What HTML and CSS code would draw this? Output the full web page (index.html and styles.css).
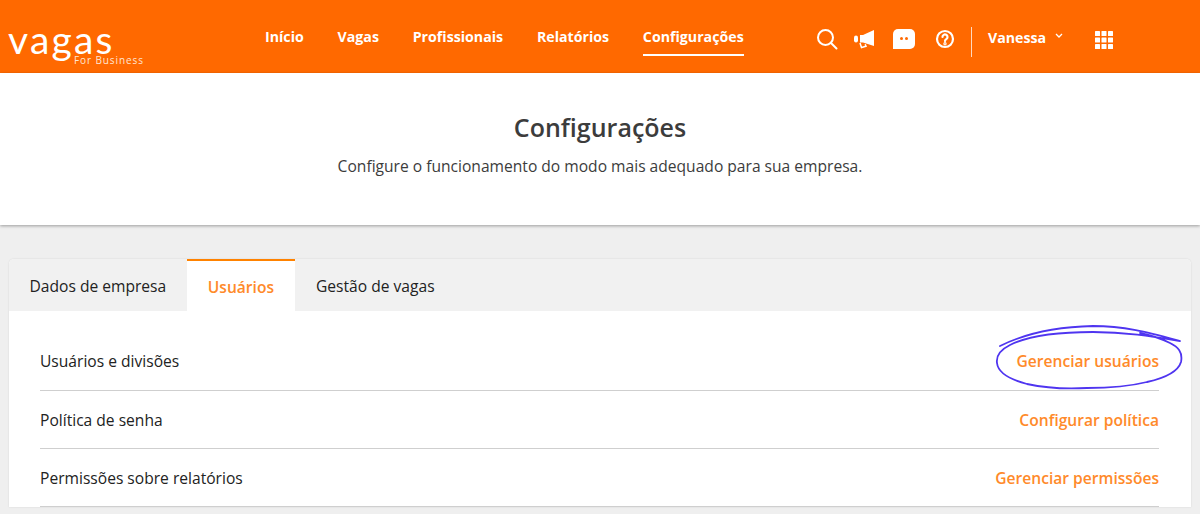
FILE: index.html
```html
<!DOCTYPE html>
<html lang="pt-BR">
<head>
<meta charset="utf-8">
<title>Configurações</title>
<link rel="stylesheet" href="styles.css">
</head>
<body>
<header class="topbar">
  <div class="logo">
    <span class="logo-word">vagas</span>
    <span class="logo-sub">For Business</span>
  </div>
  <nav class="nav">
    <a class="nav-item">Início</a>
    <a class="nav-item">Vagas</a>
    <a class="nav-item">Profissionais</a>
    <a class="nav-item">Relatórios</a>
    <a class="nav-item nav-active">Configurações</a>
  </nav>
  <div class="tools">
    <svg class="icon" width="22" height="22" viewBox="0 0 22 22" fill="none" stroke="#fff" stroke-width="2"><circle cx="9.5" cy="9.5" r="7.5"/><path d="M15 15l5.5 5.5" stroke-linecap="round"/></svg>
    <svg class="icon" width="22" height="20" viewBox="0 0 22 20" fill="#fff"><path d="M21 1v16l-11-3.5H7V6h3z"/><rect x="1" y="6.5" width="4" height="7" rx="2"/><path d="M7 14l1.500 4.500 4.500-1.300-.8-2" fill="none" stroke="#fff" stroke-width="1.500"/></svg>
    <svg class="icon" width="22" height="20" viewBox="0 0 22 20"><path d="M5 0h12a5 5 0 0 1 5 5v10a5 5 0 0 1-5 5H0V5a5 5 0 0 1 5-5z" fill="#fff"/><circle cx="8.500" cy="9.500" r="1.500" fill="#ff6900"/><circle cx="13.500" cy="9.500" r="1.500" fill="#ff6900"/></svg>
    <svg class="icon" width="20" height="20" viewBox="0 0 20 20" fill="none" stroke="#fff" stroke-width="2.200"><circle cx="10" cy="10" r="8"/><path d="M7.500 8a2.500 2.500 0 1 1 3.800 2.100c-.9.600-1.300 1-1.300 2" stroke-linecap="round"/><circle cx="10" cy="14.800" r=".6"/></svg>
    <span class="divider"></span>
    <span class="user">Vanessa</span>
    <svg class="chevron" width="8" height="6" viewBox="0 0 8 6" fill="none" stroke="#fff" stroke-width="1.300"><path d="M1 1l3 3 3-3"/></svg>
    <svg class="grid-icon" width="18" height="18" viewBox="0 0 18 18" fill="#fff"><rect width="5" height="5" rx=".5"/><rect x="6.500" width="5" height="5" rx=".5"/><rect x="13" width="5" height="5" rx=".5"/><rect y="6.500" width="5" height="5" rx=".5"/><rect x="6.500" y="6.500" width="5" height="5" rx=".5"/><rect x="13" y="6.500" width="5" height="5" rx=".5"/><rect y="13" width="5" height="5" rx=".5"/><rect x="6.500" y="13" width="5" height="5" rx=".5"/><rect x="13" y="13" width="5" height="5" rx=".5"/></svg>
  </div>
</header>

<section class="hero">
  <h1 class="hero-title">Configurações</h1>
  <p class="hero-text">Configure o funcionamento do modo mais adequado para sua empresa.</p>
</section>

<main class="content">
  <div class="card">
    <div class="tabs">
      <a class="tab">Dados de empresa</a>
      <a class="tab tab-active">Usuários</a>
      <a class="tab">Gestão de vagas</a>
    </div>
    <ul class="rows">
      <li class="row"><span>Usuários e divisões</span><a class="row-link">Gerenciar usuários</a></li>
      <li class="row"><span>Política de senha</span><a class="row-link">Configurar política</a></li>
      <li class="row"><span>Permissões sobre relatórios</span><a class="row-link">Gerenciar permissões</a></li>
    </ul>
  </div>
</main>

<svg class="scribble" width="1200" height="514" viewBox="0 0 1200 514" fill="none" stroke="#4f35f0" stroke-width="1.800" stroke-linecap="round" stroke-linejoin="round">
  <path d="M1000 346C1020 336 1050 327 1093 326C1125 326 1150 333 1180 341C1150 336 1125 332 1093 332C1060 332 1030 335 1010 345C1000 350 996 356 997 363C998 372 1008 379 1027 384C1050 389 1070 389 1087 388C1115 388 1135 385 1147 382C1165 378 1178 372 1181 362C1183 352 1178 347 1170 343C1160 338 1150 335 1140 333"/>
</svg>
</body>
</html>
```

FILE: styles.css
```css
* { box-sizing: border-box; }
html, body { margin: 0; padding: 0; }
body {
  height: 514px;
  overflow: hidden;
  background: #efefef;
  font-family: "Open Sans", "Noto Sans", sans-serif;
  color: #222;
  position: relative;
}
a { text-decoration: none; color: inherit; }

.topbar {
  height: 73px;
  background: #ff6900;
  color: #fff;
  display: flex;
  align-items: flex-start;
}
.logo {
  width: 265px;
  flex: none;
  padding: 21px 0 0 8px;
  display: flex;
  flex-direction: column;
}
.logo-word {
  font-family: "Lato", sans-serif;
  font-weight: 400;
  font-size: 39px;
  line-height: 36px;
  height: 33px;
  letter-spacing: 2.2px;
}
.logo-sub {
  font-size: 10px;
  line-height: 12px;
  letter-spacing: 0.9px;
  padding-left: 66px;
  color: #ffe6d4;
}

.nav { display: flex; gap: 33.75px; width: 545px; flex: none; }
.nav-item {
  font-size: 14.2px;
  font-weight: 700;
  line-height: 20px;
  padding: 27px 0 7px;
  border-bottom: 2px solid transparent;
}
.nav-active { border-bottom-color: #fff; }

.tools {
  display: flex;
  align-items: center;
  height: 78px;
}
.icon { flex: none; }
.tools .icon:nth-child(1) { margin-left: 6px; }
.tools .icon:nth-child(2) { margin-left: 15px; }
.tools .icon:nth-child(3) { margin-left: 18px; }
.tools .icon:nth-child(4) { margin-left: 20px; }
.divider {
  width: 1px;
  height: 30px;
  background: #ffd9bf;
  margin: 6px 0 0 16px;
}
.user {
  font-size: 14.2px;
  font-weight: 700;
  margin: 0 0 3px 16px;
}
.chevron { margin: 0 0 6px 9px; }
.grid-icon { margin: 2px 0 0 32px; }

.hero {
  height: 152px;
  background: #fff;
  text-align: center;
  box-shadow: 0 1px 3px rgba(0, 0, 0, 0.35);
  padding-top: 38px;
  color: #3c3c3c;
}
.hero-title {
  margin: 0;
  font-size: 25px;
  font-weight: 600;
  line-height: 33px;
}
.hero-text {
  margin: 11px 0 0;
  font-size: 15.6px;
  line-height: 22px;
}

.content { padding: 34px 9px 0 9px; }
.card {
  background: #fff;
  border-radius: 5px 5px 0 0;
  box-shadow: 0 0 2px rgba(0, 0, 0, 0.12);
  overflow: hidden;
}
.tabs {
  display: flex;
  height: 52px;
  background: #f1f1f1;
  padding-left: 0;
}
.tab {
  padding: 0 21px;
  font-size: 15.6px;
  line-height: 55px;
  color: #222;
}
.tab:first-child { padding: 0 20.500px 0 20.500px; }
.tab-active {
  background: #fff;
  color: #ff8a2a;
  font-weight: 600;
  border-top: 2px solid #ff8200;
  line-height: 52px;
}

.rows { list-style: none; margin: 0; padding: 22px 32px 0 31px; }
.row {
  height: 58px;
  border-bottom: 1px solid #cfcfcf;
  display: flex;
  align-items: center;
  justify-content: space-between;
  font-size: 15.6px;
}
.rows .row:first-child { padding-bottom: 1px; }
.row-link { color: #ff8a2a; font-weight: 600; font-size: 15.6px; }

.scribble { position: absolute; left: 0; top: 0; pointer-events: none; }
```
